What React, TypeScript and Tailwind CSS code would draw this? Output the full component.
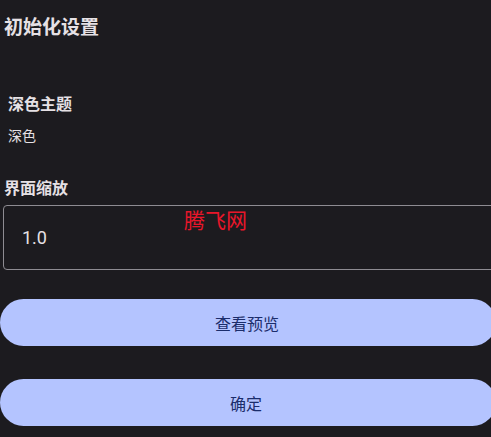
import React from 'react';

const cjk = { fontFamily: '"Noto Sans CJK SC", "Noto Sans", sans-serif' };

export default function App() {
  return (
    <div className="relative w-[491px] h-[437px] overflow-hidden bg-[#1c1b1f] text-[#e6e1e5]" style={cjk}>
      <div className="flex flex-col">
        <h1 className="pt-[12px] pl-[4px] text-[19px] leading-[28px] font-bold">初始化设置</h1>

        <div className="mt-[51px] pl-[8px] flex flex-col">
          <span className="text-[16px] leading-[24px] font-bold">深色主题</span>
          <span className="mt-[10px] text-[14px] leading-[20px] text-[#e6e1e5]">深色</span>
        </div>

        <span className="mt-[30px] pl-[4px] text-[16px] leading-[24px] font-bold">界面缩放</span>

        <div className="mt-[6px] ml-[3px] w-[494px] h-[65px] shrink-0 rounded-[4px] border border-[#8e8c92] flex items-center pl-[18px]">
          <span className="text-[18px] text-[#e6e1e5]" style={{ fontFamily: 'Roboto, "Noto Sans", sans-serif' }}>1.0</span>
        </div>

        <button className="mt-[29px] w-[496px] h-[47px] shrink-0 rounded-full bg-[#b4c4ff] text-[#1b2d6b] text-[16px] pl-[2px]">
          <span className="relative left-[-2px]">查看预览</span>
        </button>

        <button className="mt-[33px] w-[496px] h-[47px] shrink-0 rounded-full bg-[#b4c4ff] text-[#1b2d6b] text-[16px]">
          <span className="relative left-[-2px]">确定</span>
        </button>
      </div>

      <span className="absolute left-[184px] top-[205px] text-[21px] leading-[28px] text-[#e8162a]">腾飞网</span>
    </div>
  );
}
